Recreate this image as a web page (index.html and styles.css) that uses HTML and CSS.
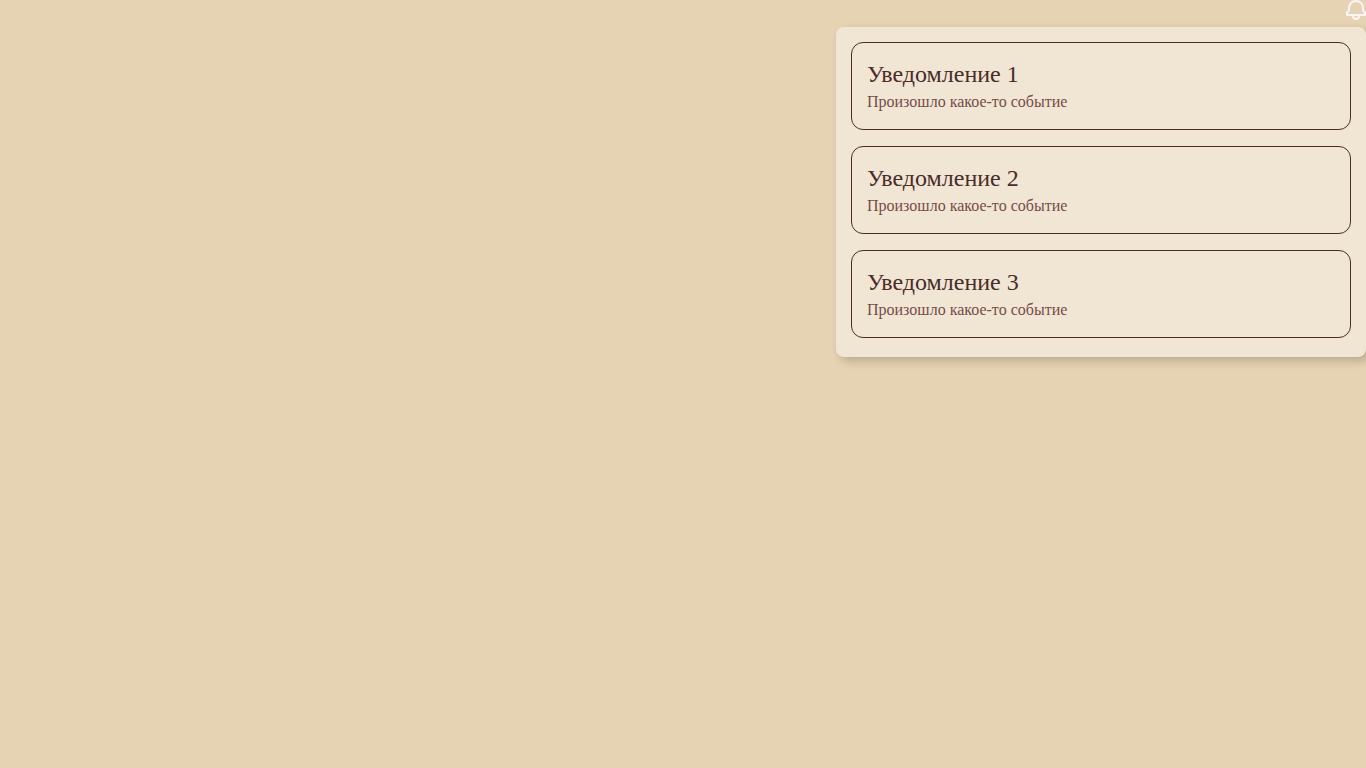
FILE: index.html
```html
<!DOCTYPE html>
<html lang="ru">
<head>
  <meta charset="utf-8">
  <meta name="viewport" content="width=device-width, initial-scale=1">
  <title>Уведомления</title>
  <link rel="stylesheet" href="styles.css">
</head>
<body>
  <div class="notifications">
    <button class="bell" type="button" aria-label="Уведомления" aria-expanded="true" aria-controls="panel">
      <svg class="bell-icon" viewBox="0 0 20 20" fill="none" stroke="currentColor" stroke-width="2" aria-hidden="true">
        <path d="M1 15V12.5L3 10.5V8C3 4 6 1 10 1C14 1 17 4 17 8V10.5L19 12.5V15Z" stroke-linejoin="round"/>
        <path d="M7 15.5C7 17.7 8.2 19 10 19C11.8 19 13 17.7 13 15.5"/>
      </svg>
    </button>
    <section class="panel" id="panel">
      <article class="card">
        <h2 class="card-title">Уведомление 1</h2>
        <p class="card-text">Произошло какое-то событие</p>
      </article>
      <article class="card">
        <h2 class="card-title">Уведомление 2</h2>
        <p class="card-text">Произошло какое-то событие</p>
      </article>
      <article class="card">
        <h2 class="card-title">Уведомление 3</h2>
        <p class="card-text">Произошло какое-то событие</p>
      </article>
    </section>
  </div>
</body>
</html>
```
FILE: styles.css
```css
* {
  box-sizing: border-box;
}

body {
  margin: 0;
  min-height: 100vh;
  overflow-x: hidden;
  background: #e6d3b3;
  font-family: "Liberation Serif", "Times New Roman", serif;
}

.notifications {
  display: flex;
  flex-direction: column;
  align-items: flex-end;
  gap: 7px;
}

.bell {
  display: block;
  padding: 0;
  border: 0;
  background: none;
  color: #f8f4f8;
  cursor: pointer;
}

.bell-icon {
  display: block;
  width: 20px;
  height: 20px;
}

.panel {
  display: flex;
  flex-direction: column;
  gap: 16px;
  width: 530px;
  max-width: 100%;
  padding: 15px 15px 19px;
  border-radius: 8px;
  background: #f1e6d4;
  box-shadow: 4px 4px 10px rgba(0, 0, 0, 0.2);
}

.card {
  padding: 15px;
  border: 1px solid #4a2c2a;
  border-radius: 12px;
}

.card-title {
  margin: 0;
  color: #4a2c2a;
  font-size: 24px;
  font-weight: 400;
  line-height: 32px;
}

.card-text {
  margin: 0;
  color: #754c48;
  font-size: 16px;
  line-height: 24px;
}
```
